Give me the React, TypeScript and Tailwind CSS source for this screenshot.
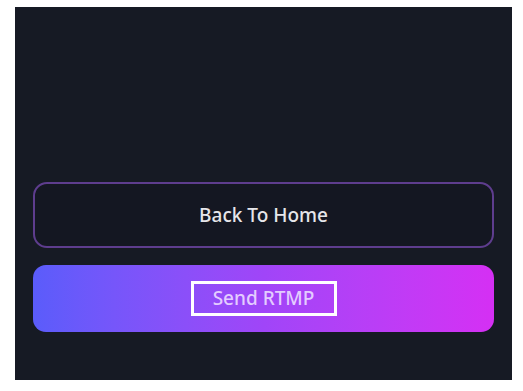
export default function App() {
  return (
    <div className="w-[523px] h-[391px] bg-white pt-[7px] pl-[15px]">
      <div className="w-[497px] h-[373px] bg-[#161a24] flex flex-col justify-end px-[18px] pb-[48px] gap-[17px]" style={{ fontFamily: '"Noto Sans", "Open Sans", sans-serif' }}>
        <button className="h-[66px] w-full rounded-[14px] border-2 border-[#5e3d8e] bg-[#141722] text-[#e6e6ea] text-[19px] font-medium flex items-center justify-center">
          Back To Home
        </button>
        <button className="h-[67px] w-full rounded-[13px] bg-gradient-to-r from-[#5a5cfb] via-[#a045f8] to-[#d52ff4] flex items-center justify-center">
          <span className="w-[146px] h-[35px] border-[3px] border-white flex items-center justify-center text-[#e3ccff] text-[19px] font-medium">
            Send RTMP
          </span>
        </button>
      </div>
    </div>
  );
}
